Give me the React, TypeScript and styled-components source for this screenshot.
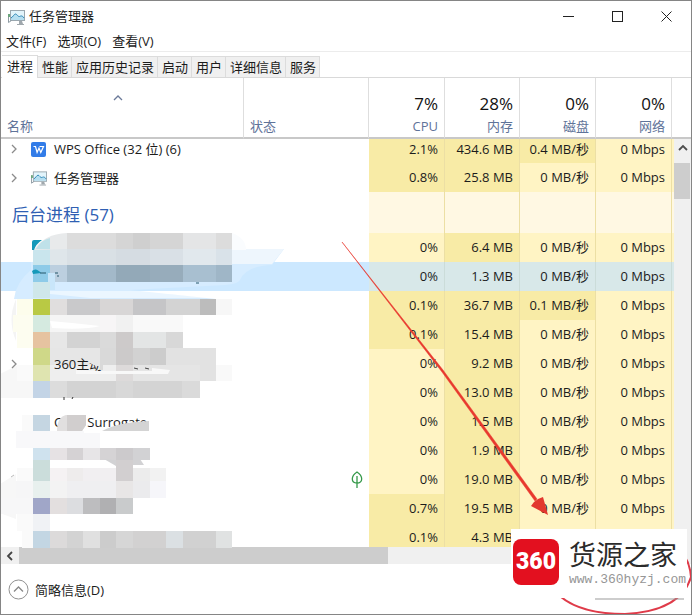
import React from "react";
import styled, { createGlobalStyle, css } from "styled-components";

const Global = createGlobalStyle`
  *, *::before, *::after { box-sizing: border-box; }
  html, body { margin: 0; height: 100%; overflow: hidden; background: #fff; }
  body, button {
    font-family: "Open Sans", "Noto Sans CJK SC", sans-serif;
    font-size: 13px;
    color: #1c1c1c;
  }
  button { border: 0; padding: 0; margin: 0; background: none; }
`;

const Window = styled.div`
  position: relative;
  display: flex;
  flex-direction: column;
  height: 100vh;
  border: 1px solid #858585;
  background: #fff;
  overflow: hidden;
  line-height: 20px;
`;

const TitleBar = styled.header`
  display: flex;
  align-items: center;
  height: 31px;
  flex: none;
  padding-left: 7px;
`;

const Title = styled.h1`
  flex: 1;
  margin: 0;
  padding: 0 0 2px 4px;
  font-size: 13px;
  font-weight: 400;
`;

const Caption = styled.button`
  display: grid;
  place-items: center;
  width: 49px;
  height: 30px;
`;

const MenuBar = styled.nav`
  display: flex;
  gap: 11px;
  height: 20px;
  flex: none;
  padding-left: 5px;
  border-bottom: 1px solid #ececec;
`;

const MenuItem = styled.button`
  line-height: 19px;
`;

const Tabs = styled.div`
  display: flex;
  align-items: flex-end;
  flex: none;
  height: 26px;
  padding-left: 1px;
  border-bottom: 1px solid #d9d9d9;
`;

const Tab = styled.button<{ $active?: boolean }>`
  height: 21px;
  padding: 0 3px 0 4px;
  line-height: 20px;
  background: #f0f0f0;
  border-top: 1px solid #dcdcdc;
  border-right: 1px solid #dcdcdc;
  ${(p) =>
    p.$active &&
    css`
      height: 23px;
      padding: 0 4px 2px 5px;
      margin-bottom: -1px;
      background: #fff;
    `}
`;

const Main = styled.main`
  display: flex;
  flex: 1;
  min-height: 0;
  overflow: hidden;
`;

const TableArea = styled.div`
  flex: 1;
  min-width: 0;
  overflow: hidden;
`;

const Table = styled.table`
  width: 100%;
  table-layout: fixed;
  border-collapse: separate;
  border-spacing: 0;
`;

const Col = styled.col<{ $w?: number }>`
  width: ${(p) => (p.$w ? `${p.$w}px` : "auto")};
`;

const Head = styled.th<{ $metric?: boolean; $plain?: boolean }>`
  height: 61px;
  padding: 14px 6px 0;
  font-weight: 400;
  color: #5f7399;
  text-align: ${(p) => (p.$metric ? "right" : "left")};
  vertical-align: bottom;
  border-bottom: 2px solid #c8c8c8;
  border-right: ${(p) => (p.$plain ? "0" : "1px solid #dedede")};
`;

const Usage = styled.span`
  display: block;
  font-size: 17px;
  line-height: 24px;
  color: #111;
`;

const SortMark = styled.span`
  display: flex;
  justify-content: center;
  height: 22px;
  padding-right: 8px;
`;

const HeadLabel = styled.span`
  display: block;
  line-height: 21px;
`;

const Row = styled.tr<{ $selected?: boolean; $first?: boolean }>`
  height: ${(p) => (p.$first ? 24 : 29)}px;
  background: ${(p) => (p.$selected ? "#cce8ff" : "#fff")};
  td {
    padding-top: 0;
    padding-bottom: ${(p) => (p.$first ? 4 : 0)}px;
  }
`;

const NameCell = styled.td`
  padding-left: 8px;
  white-space: nowrap;
`;

const NameLine = styled.div`
  position: relative;
  z-index: 2;
  display: flex;
  align-items: center;
`;

const Expand = styled.button`
  width: 11px;
  height: 16px;
  display: grid;
  place-items: center;
`;

const IconSlot = styled.span`
  display: flex;
  width: 16px;
  margin: 0 7px 0 11px;
`;

const StatusCell = styled.td`
  padding: 0 6px;
  svg { display: block; margin-left: auto; }
`;

const tones = { low: "#fff4c4", high: "#f8eba6", none: "#fff8e3", sel: "#d8e8e9" };
type Tone = keyof typeof tones;

const Value = styled.td<{ $tone: Tone }>`
  padding: 0 6px 0 0;
  text-align: right;
  white-space: nowrap;
  line-height: 19px;
  background: ${(p) => tones[p.$tone]};
  border-right: 1px solid ${(p) => (p.$tone === "sel" ? "#cbdcd9" : "#ecdfa4")};
`;

const Gutter = styled.td<{ $tone: Tone }>`
  padding: 0;
  background: ${(p) => tones[p.$tone]};
`;

const GroupCell = styled.th`
  height: 41px;
  padding: 4px 0 0 11px;
  text-align: left;
  font-size: 17px;
  font-weight: 400;
  color: #2f5fb3;
`;

const VScroll = styled.div`
  display: flex;
  flex-direction: column;
  width: 17px;
  flex: none;
  background: #f0f0f0;
`;

const VHead = styled.div`
  height: 61px;
  background: #fff;
  border-bottom: 2px solid #c8c8c8;
`;

const VButton = styled.button`
  display: grid;
  place-items: center;
  height: 24px;
  padding-bottom: 5px;
`;

const VThumb = styled.div`
  height: 36px;
  margin-right: 1px;
  background: #cdcdcd;
`;

const HScroll = styled.div`
  display: flex;
  flex: none;
  height: 17px;
  background: #f0f0f0;
`;

const HButton = styled.button`
  display: grid;
  place-items: center;
  width: 18px;
`;

const HThumb = styled.div`
  width: 55%;
  max-width: 369px;
  background: #cdcdcd;
`;

const Footer = styled.footer`
  display: flex;
  align-items: center;
  flex: none;
  height: 50px;
  padding-left: 7px;
`;

const Toggle = styled.button`
  display: flex;
  align-items: center;
  gap: 6px;
`;

const Layer = styled.svg<{ $z: number }>`
  position: absolute;
  top: -1px;
  left: -1px;
  z-index: ${(p) => p.$z};
  pointer-events: none;
`;

const Watermark = styled.aside`
  position: absolute;
  right: 4px;
  bottom: 16px;
  z-index: 4;
  display: flex;
  align-items: center;
  gap: 10px;
  height: 69px;
  padding: 0 1px 0 2px;
  background: #fff;
`;

const Badge = styled.span`
  display: grid;
  place-items: center;
  width: 46px;
  height: 46px;
  margin-top: -3px;
  border-radius: 8px;
  background: #e3101f;
  color: #fff;
  font-family: Roboto, sans-serif;
  font-size: 23px;
  font-weight: 900;
`;

const Brand = styled.div`
  display: flex;
  flex-direction: column;
  font-size: 27px;
  line-height: 34px;
  font-weight: 400;
  color: #2b2b2b;
  padding-bottom: 3px;
`;

const Site = styled.a`
  font-family: "Liberation Mono", monospace;
  font-size: 13px;
  line-height: 15px;
  font-weight: 400;
  color: #969696;
  text-decoration: none;
`;

const MonitorIcon = () => (
  <svg width="17" height="16" viewBox="0 0 17 16" aria-hidden="true">
    <rect x="2.5" y="1.5" width="14" height="10" fill="#e2f4fb" stroke="#9aa7af" />
    <path d="M3 9c2-1 3-4 4.500-4S10 8 11.500 7.500 14 6 16 9v2H3z" fill="#b5def0" />
    <path d="M3 9c2-1 3-4 4.500-4S10 8 11.500 7.500 14 6 16 9" fill="none" stroke="#2c86b5" />
    <path d="M11 12h3l1 3H11z" fill="#a0a8ad" />
    <path d="M9 15.500h7" stroke="#a0a8ad" />
    <path d="M.5 5.500v8M.5 13.500l3-2" fill="none" stroke="#8e9ba3" />
    <rect x="0" y="5" width="2" height="3" fill="#6ba57b" />
  </svg>
);

const WpsIcon = () => (
  <svg width="15" height="15" viewBox="0 0 15 15" aria-hidden="true">
    <rect width="15" height="15" rx="2" fill="#327ce8" />
    <path d="M2.5 4.500h2l1.600 6L8 6l1.800 4.500 2.700-6H8.500" fill="none" stroke="#fff" strokeWidth="1.200" />
  </svg>
);

const LeafIcon = () => (
  <svg width="12" height="17" viewBox="0 0 12 17" aria-hidden="true">
    <path d="M6 1C3 3 1.300 5 1.300 8c0 2.500 2 4 4.700 4s4.700-1.500 4.700-4C10.700 5 9 3 6 1zM6 5v12" fill="none" stroke="#35994a" strokeWidth="1.300" />
  </svg>
);

const chevrons = {
  up: "M1 6l4-4 4 4",
  right: "M2 1l4 4-4 4",
  left: "M7 1L3 5l4 4",
};

const Chevron = ({ dir, color, weight = 1.3 }: { dir: keyof typeof chevrons; color: string; weight?: number }) => (
  <svg width="10" height="10" viewBox="0 0 10 10" aria-hidden="true">
    <path d={chevrons[dir]} fill="none" stroke={color} strokeWidth={weight} />
  </svg>
);

interface Process {
  name?: string;
  icon?: React.ReactNode;
  expandable?: boolean;
  selected?: boolean;
  eco?: boolean;
  values: string[];
}

const idle = "0 MB/秒";
const apps: Process[] = [
  { name: "WPS Office (32 位) (6)", icon: <WpsIcon />, expandable: true, values: ["2.1%", "434.6 MB", "0.4 MB/秒", "0 Mbps"] },
  { name: "任务管理器", icon: <MonitorIcon />, expandable: true, values: ["0.8%", "25.8 MB", idle, "0 Mbps"] },
];
const background: Process[] = [
  { values: ["0%", "6.4 MB", idle, "0 Mbps"] },
  { selected: true, values: ["0%", "1.3 MB", idle, "0 Mbps"] },
  { values: ["0.1%", "36.7 MB", "0.1 MB/秒", "0 Mbps"] },
  { values: ["0.1%", "15.4 MB", idle, "0 Mbps"] },
  { name: "360主动", expandable: true, values: ["0%", "9.2 MB", idle, "0 Mbps"] },
  { values: ["0%", "13.0 MB", idle, "0 Mbps"] },
  { name: "COM Surrogate", values: ["0%", "1.5 MB", idle, "0 Mbps"] },
  { values: ["0%", "1.9 MB", idle, "0 Mbps"] },
  { eco: true, values: ["0%", "19.0 MB", idle, "0 Mbps"] },
  { values: ["0.7%", "19.5 MB", idle, "0 Mbps"] },
  { values: ["0.1%", "4.3 MB", "", ""] },
];

const toneOf = (p: Process, i: number): Tone => {
  if (p.selected) return "sel";
  return i === 1 || parseFloat(p.values[i]) > 0 ? "high" : "low";
};

const ProcessRow = ({ p, first }: { p: Process; first?: boolean }) => (
  <Row $selected={p.selected} $first={first}>
    <NameCell>
      <NameLine>
        {p.expandable ? (
          <Expand aria-label="展开"><Chevron dir="right" color="#8b8b8b" /></Expand>
        ) : (
          <Expand as="span" />
        )}
        <IconSlot>{p.icon}</IconSlot>
        {p.name}
      </NameLine>
    </NameCell>
    <StatusCell>{p.eco && <LeafIcon />}</StatusCell>
    {p.values.map((v, i) => (
      <Value key={i} $tone={toneOf(p, i)}>{v}</Value>
    ))}
    <Gutter $tone={p.selected ? "sel" : "low"} />
  </Row>
);

/* Pixelated strips hiding process names: [y, height, [x, right edge, colour]...] */
type Block = [number, number, string];
const strips: [number, number, Block[]][] = [
  [249, 16, [[33, 50, "#c9e5ed"], [50, 67, "#dfe6ea"], [67, 116, "#d9e0e5"], [116, 150, "#d5dce2"], [150, 183, "#d9e0e6"], [183, 216, "#e1e8ed"], [216, 232, "#d9e2e9"]]],
  [265, 17, [[33, 50, "#8ecbe8"], [50, 67, "#bccfdf"], [67, 116, "#a3b9c9"], [116, 150, "#93a9b8"], [150, 183, "#97acbb"], [183, 216, "#a8bfd0"], [216, 232, "#9fb6c7"]]],
  [299, 16, [[17, 33, "#fdfdec"], [33, 50, "#b9c944"], [50, 67, "#e0dede"], [67, 100, "#c9c9cb"], [100, 133, "#d8d6d6"], [133, 166, "#c5c5c7"], [166, 200, "#d3d3d3"], [200, 216, "#bcbcbc"], [216, 232, "#f7f7f7"]]],
  [315, 17, [[13, 33, "#fdfdf0"], [33, 50, "#d5eae0"], [50, 100, "#f5f5f5"], [100, 116, "#f7f5f6"], [116, 133, "#f1f1f1"], [133, 183, "#f9f9f9"]]],
  [332, 16, [[17, 33, "#fdfdf0"], [33, 50, "#e6c3a0"], [50, 67, "#e7e7e7"], [67, 100, "#d3d3d3"], [100, 116, "#dadada"], [116, 133, "#cdcaca"], [133, 166, "#e3e5e5"], [166, 183, "#d8d8d8"]]],
  [348, 17, [[33, 50, "#cfd888"], [50, 100, "#e6e6e6"], [100, 116, "#d9d9d9"], [116, 133, "#cccaca"], [133, 150, "#d2d2d2"], [150, 166, "#cccccc"], [166, 216, "#e2e2e2"]]],
  [365, 16, [[17, 33, "#fafafa"], [33, 50, "#dfe4b0"], [50, 116, "#eeeeee"], [116, 133, "#dddada"], [133, 200, "#e5e5e5"], [200, 216, "#e2e2e2"], [216, 232, "#f9f9f9"]]],
  [381, 17, [[0, 33, "#f7f7f7"], [33, 50, "#c3d4e6"], [50, 67, "#dcdcdc"], [67, 116, "#d3d3d3"], [116, 133, "#d8d8d8"], [133, 182, "#d4d4d4"], [182, 200, "#dadada"]]],
  [415, 16, [[22, 33, "#fafafa"], [33, 50, "#c5d6e2"]]],
  [431, 17, [[16, 100, "#f8f8fa"]]],
  [448, 12, [[33, 50, "#cfe2ee"], [50, 67, "#e6e2e4"], [67, 83, "#d5d2d4"], [83, 100, "#e7e5e7"], [100, 116, "#d5d3d5"], [116, 133, "#cccacc"], [133, 150, "#d2d2d4"]]],
  [460, 21, [[33, 50, "#cbdddb"], [116, 133, "#d2cfd0"]]],
  [468, 13, [[17, 33, "#fafafa"], [50, 67, "#f5f2f3"], [67, 83, "#eeecec"], [83, 116, "#f1eff1"], [133, 150, "#ececec"], [150, 166, "#f2f2f2"]]],
  [481, 17, [[16, 33, "#f6f6f7"], [33, 50, "#e8f0ee"], [50, 67, "#f3f3f3"], [67, 116, "#efeff1"], [116, 133, "#e8e6e6"], [133, 150, "#ebebed"], [150, 166, "#f6f6fa"]]],
  [498, 16, [[0, 33, "#f7f7f8"], [33, 50, "#a0a6c8"], [50, 67, "#e3dfdf"], [67, 83, "#dcdde0"], [83, 100, "#bdbdbf"], [100, 116, "#b0b0b2"], [116, 133, "#c9cbcc"]]],
  [514, 17, [[17, 33, "#fafafa"], [33, 50, "#f0f2f5"]]],
  [531, 17, [[22, 33, "#fafafa"], [33, 50, "#c3d6e3"], [50, 67, "#dcdada"], [67, 83, "#d3d3d3"], [83, 100, "#e0e0e0"], [100, 116, "#cccccc"], [116, 133, "#d6d6d6"], [133, 166, "#d2d1d1"], [166, 183, "#dbe0e3"], [183, 216, "#d1d1d1"], [216, 232, "#e0e2e2"]]],
];

const Censor = () => (
  <Layer $z={1} width="692" height="615" viewBox="0 0 692 615" aria-hidden="true">
    <path d="M31 262L284 249L272 265Q246 266 240 280Q238 284 225 285L130 290L216 299H14Q16 282 31 270z" fill="#d6ecff" />
    <path d="M33 249H284L272 264H33z" fill="#eef6fd" />
    <path d="M232 233Q246 238 246 250H232z" fill="#fafcfe" />
    <path d="M0 374L18 365H33V381H0zM0 484L16 474V519L0 513z" fill="#f7f7f7" />
    <path d="M16 299Q7 320 16 341z" fill="#f4f4f4" />
    {strips.map(([y, h, blocks]) =>
      blocks.map(([x, right, fill]) => (
        <rect key={`${y}-${x}`} x={x} y={y} width={right - x} height={h} fill={fill} shapeRendering="crispEdges" />
      ))
    )}
    <path d="M34 250Q44 234 67 233V249z" fill="#e8eaeb" />
    <path d="M36 249Q41 240 50 238V249z" fill="#bfe1e9" />
    <path d="M67 233H116V249H67z" fill="#dcdcdc" />
    <path d="M116 233H183V249H116z" fill="#d5d5d5" />
    <path d="M133 233H150V249H133z" fill="#cfcfcf" />
    <path d="M183 233H216V249H183z" fill="#e4e5e6" />
    <path d="M216 233H232V249H216z" fill="#dcdcdc" />
    <path d="M32 242Q32 240 34 240H42Q36 244 34 250H32z" fill="#1599b9" />
    <path d="M32 271Q36 267 41 273L33 274z" fill="#1599b9" />
    <path d="M48 273H55V290H50V282H48z" fill="#c9e6fa" />
    <path d="M40 273h6M55 273h3M57 276h2M196 283h3" stroke="#24566b" />
    <path d="M33 282H50V298H33z" fill="#cfe7ea" />
    <path d="M50 291H218L170 294L214 298H90L50 294z" fill="#fff" fillOpacity=".5" />
    <path d="M50 321Q75 323 100 326Q85 330 52 328z" fill="#fff" />
    <path d="M104 459L116 466V460zM133 459H140L144 465H133z" fill="#d2d2d4" />
    <path d="M11 477l3-2" stroke="#bbb" />
  </Layer>
);

const Covers = () => (
  <Layer $z={3} width="692" height="615" viewBox="0 0 692 615" aria-hidden="true">
    <path d="M89 356H100V366H97L89 363z" fill="#e6e6e6" />
    <path d="M100 356H103V370H100z" fill="#d9d9d9" />
    <path d="M76 370L101 371H152V368L170 370L168 374H76z" fill="#f8f8f8" />
    <path d="M134 368l4 1M145 368l4 1" stroke="#444" />
    <path d="M57 431Q57 417 66 415H86V425L82 431z" fill="#e1dfdf" />
    <path d="M67 415H86V425L82 431H67z" fill="#d1cece" />
    <path d="M84 428H116V433H84z" fill="#fff" />
    <path d="M102 431Q118 422 149 421V431z" fill="#d4d4d4" />
    <path d="M64 397v3M73 397l-1 2" stroke="#333" />
    <path d="M342 242L443 370L537 499L535 501L442 372z" fill="#e8392f" stroke="#e8392f" strokeWidth=".5" />
    <path d="M548 515L543 497L538 499L534 502L531 506z" fill="#e2382f" />
    <path d="M561 597Q582 614 625 614Q681 611 691 577Q690 564 684 555" fill="none" stroke="#df3b49" strokeWidth="2" />
    <path d="M595 599H684" stroke="#9b9b9b" />
    <path d="M70 614.500H122" stroke="#468a39" />
  </Layer>
);

const metrics = [["7%", "CPU"], ["28%", "内存"], ["0%", "磁盘"], ["0%", "网络"]];

export default function App() {
  return (
    <>
      <Global />
      <Window>
        <TitleBar>
          <MonitorIcon />
          <Title>任务管理器</Title>
          <Caption aria-label="最小化"><svg width="11" height="11"><path d="M0 5.500h11" stroke="#222" /></svg></Caption>
          <Caption aria-label="最大化"><svg width="11" height="11"><rect x=".5" y=".5" width="10" height="10" fill="none" stroke="#222" /></svg></Caption>
          <Caption aria-label="关闭"><svg width="11" height="11"><path d="M.5.5l10 10m0-10l-10 10" stroke="#222" /></svg></Caption>
        </TitleBar>
        <MenuBar>
          {["文件(F)", "选项(O)", "查看(V)"].map((m) => <MenuItem key={m}>{m}</MenuItem>)}
        </MenuBar>
        <Tabs role="tablist">
          {["进程", "性能", "应用历史记录", "启动", "用户", "详细信息", "服务"].map((t, i) => (
            <Tab key={t} role="tab" aria-selected={i === 0} $active={i === 0}>{t}</Tab>
          ))}
        </Tabs>
        <Main>
          <TableArea>
            <Table>
              <colgroup>
                <Col /><Col $w={125} /><Col $w={76} /><Col $w={75} /><Col $w={76} /><Col $w={76} /><Col $w={2} />
              </colgroup>
              <thead>
                <tr>
                  <Head>
                    <SortMark><Chevron dir="up" color="#6b7a99" /></SortMark>
                    <HeadLabel>名称</HeadLabel>
                  </Head>
                  <Head><HeadLabel>状态</HeadLabel></Head>
                  {metrics.map(([u, l]) => (
                    <Head key={l} $metric><Usage>{u}</Usage><HeadLabel>{l}</HeadLabel></Head>
                  ))}
                  <Head as="td" $plain />
                </tr>
              </thead>
              <tbody>
                {apps.map((p, i) => <ProcessRow key={i} p={p} first={i === 0} />)}
                <tr>
                  <GroupCell colSpan={2} scope="rowgroup">后台进程 (57)</GroupCell>
                  {metrics.map(([, l]) => <Value key={l} $tone="none" />)}
                  <Gutter $tone="none" />
                </tr>
                {background.map((p, i) => <ProcessRow key={i} p={p} />)}
              </tbody>
            </Table>
          </TableArea>
          <VScroll>
            <VHead />
            <VButton aria-label="向上滚动"><Chevron dir="up" color="#4d4d4d" weight={1.8} /></VButton>
            <VThumb />
          </VScroll>
        </Main>
        <HScroll>
          <HButton aria-label="向左滚动"><Chevron dir="left" color="#444" weight={1.8} /></HButton>
          <HThumb />
        </HScroll>
        <Footer>
          <Toggle>
            <svg width="21" height="21" viewBox="0 0 21 21" aria-hidden="true">
              <circle cx="10.500" cy="10.500" r="9.500" fill="none" stroke="#929292" />
              <path d="M6 12.500l4.500-4.500 4.500 4.500" fill="none" stroke="#888" strokeWidth="1.300" />
            </svg>
            简略信息(D)
          </Toggle>
        </Footer>
        <Censor />
        <Covers />
        <Watermark>
          <Badge>360</Badge>
          <Brand>
            货源之家
            <Site href="#">www.360hyzj.com</Site>
          </Brand>
        </Watermark>
      </Window>
    </>
  );
}
